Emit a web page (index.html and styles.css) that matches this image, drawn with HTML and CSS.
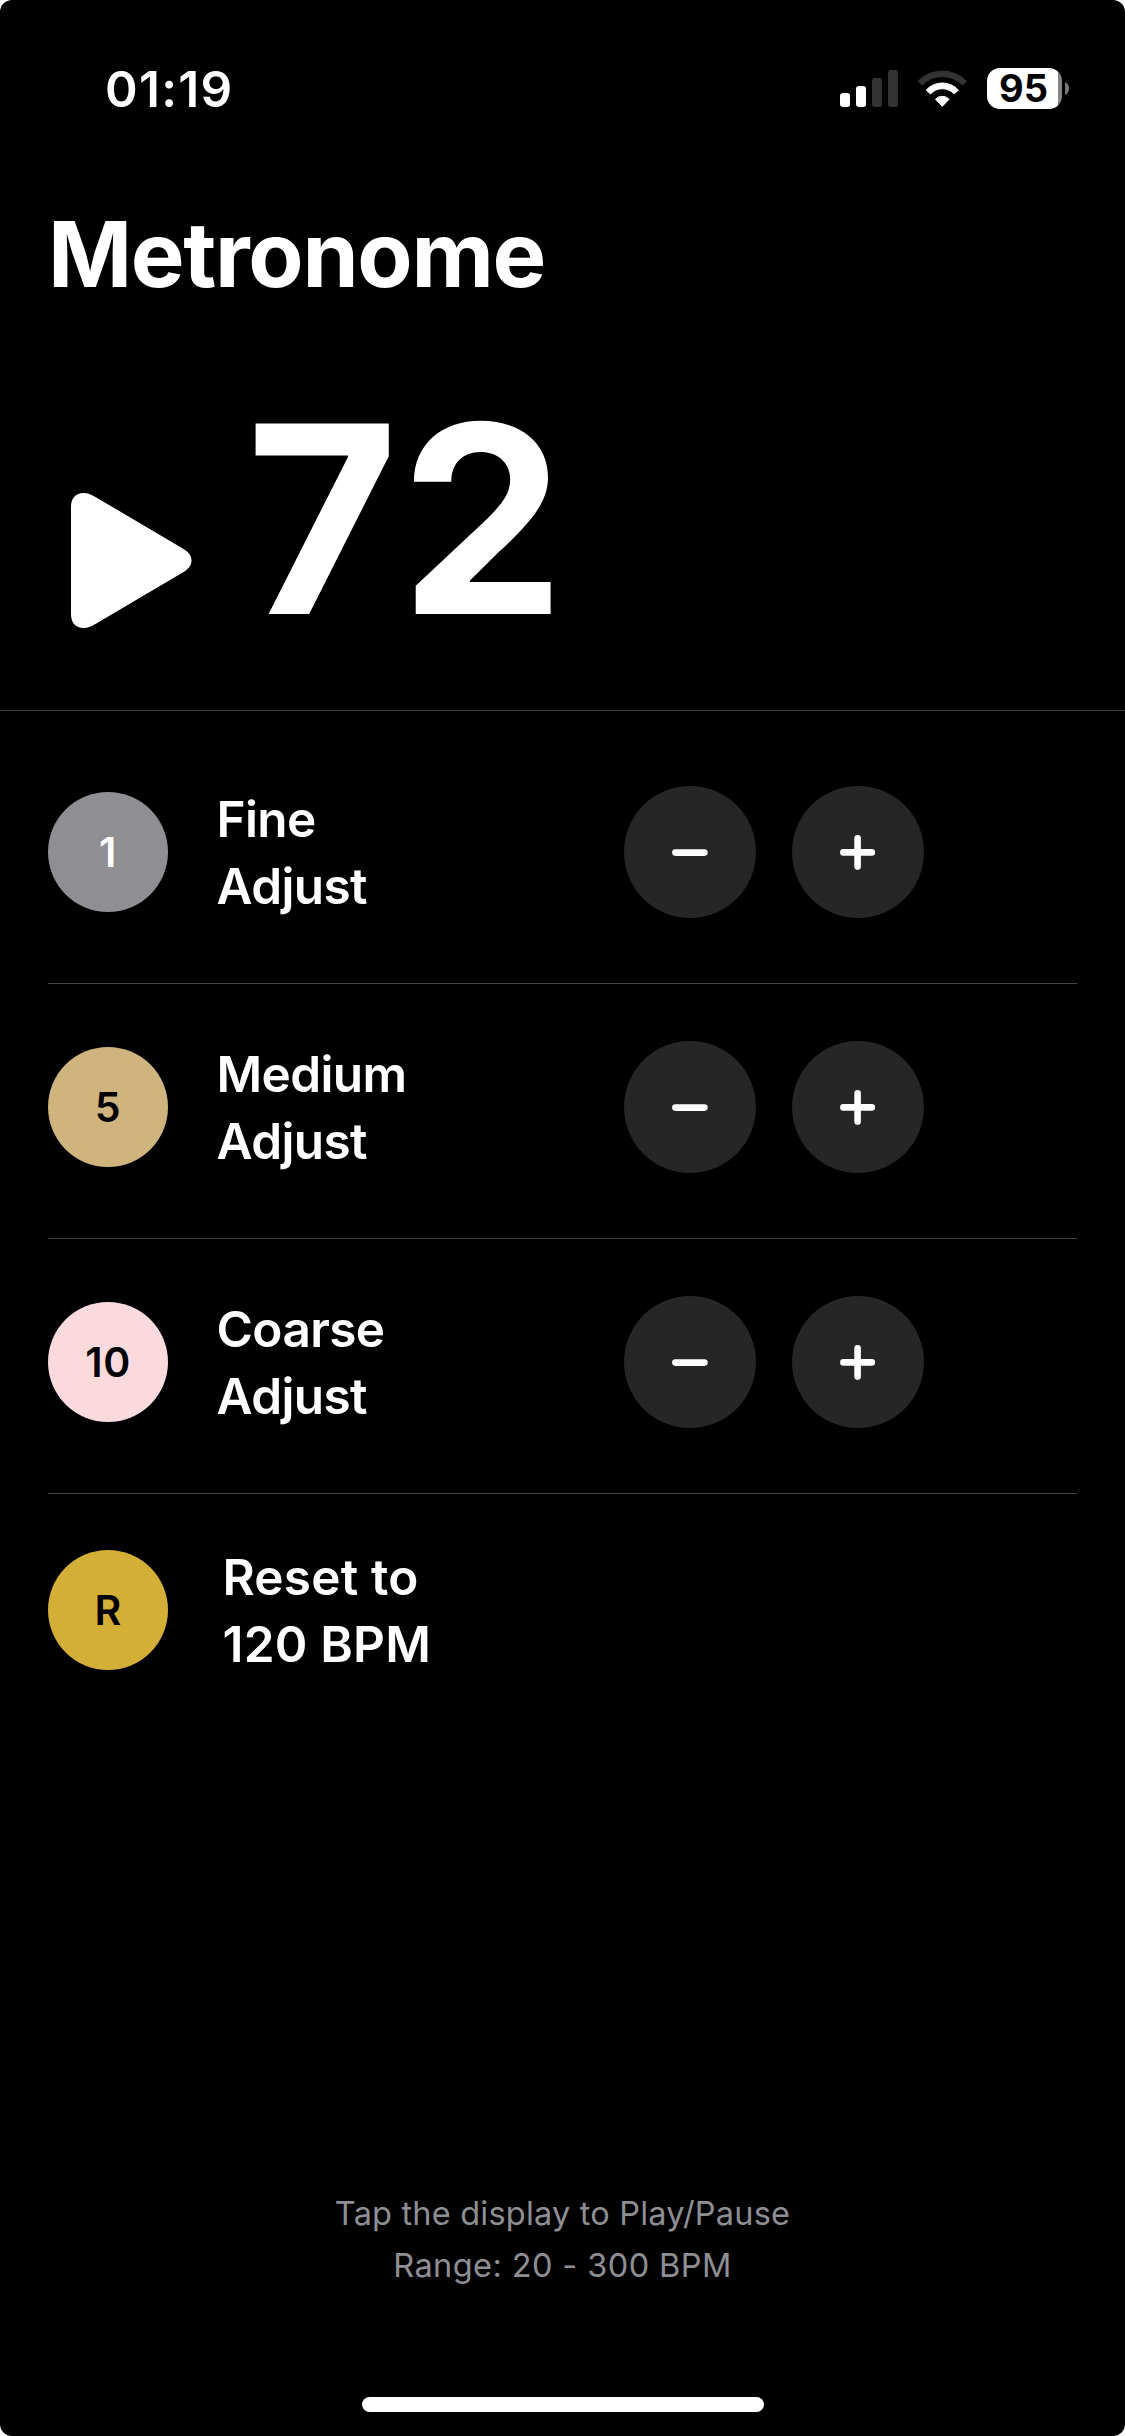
FILE: index.html
```
<!DOCTYPE html>
<html lang="en">
<head>
<meta charset="utf-8">
<title>Metronome</title>
<link rel="stylesheet" href="styles.css">
</head>
<body>
<div class="screen">
  <header class="status">
    <span class="time">01:19</span>
    <div class="indicators">
      <svg class="signal" width="58" height="37" viewBox="0 0 58 37">
        <rect x="0" y="23" width="10" height="14" rx="3" fill="#fff"/>
        <rect x="16" y="16" width="10" height="21" rx="3" fill="#fff"/>
        <rect x="32" y="8" width="10" height="29" rx="3" fill="#333"/>
        <rect x="48" y="0" width="10" height="37" rx="3" fill="#333"/>
      </svg>
      <svg class="wifi" width="51" height="37" viewBox="0 0 51 37">
        <path fill="#333" stroke="#333" stroke-linejoin="round" d="M1 11.2A34.1 34.1 0 0 1 49.6 11.2L45.6 15A28.7 28.7 0 0 0 5 15Z"/>
        <path fill="#fff" stroke="#fff" stroke-linejoin="round" d="M9.2 20.1A21.8 21.8 0 0 1 41.4 20.1L37.1 23.9A16 16 0 0 0 13.5 23.9Z"/>
        <path fill="#fff" stroke="#fff" stroke-linejoin="round" d="M18.5 29.3A9.2 9.2 0 0 1 32.1 29.3L25.3 36.3Z"/>
      </svg>
      <div class="battery">
        <span class="battery-level">95</span>
        <svg class="battery-nub" width="4" height="13" viewBox="0 0 4 13"><path fill="#777" d="M0 0C2.6 1.2 4 3.6 4 6.5S2.6 11.8 0 13Z"/></svg>
      </div>
    </div>
  </header>

  <h1 class="title">Metronome</h1>

  <section class="display">
    <svg class="play" width="121" height="135" viewBox="0 0 121 135">
      <path fill="#fff" d="M0 14C0 5 5 0 12.5 0C17 0 20 1.5 24 3.7L110.5 54.7C117 58.5 120.5 62 120.5 67.5S117 76.5 110.5 80.3L24 131.3C20 133.5 17 135 12.5 135C5 135 0 130 0 121Z"/>
    </svg>
    <span class="bpm">72</span>
  </section>

  <main class="controls">
    <div class="row">
      <span class="badge badge-fine">1</span>
      <div class="label">Fine<br>Adjust</div>
      <div class="buttons">
        <button class="round" aria-label="Decrease by 1"><svg width="36" height="36" viewBox="0 0 36 36"><path d="M3.4 18.6H32.4"/></svg></button>
        <button class="round" aria-label="Increase by 1"><svg width="36" height="36" viewBox="0 0 36 36"><path d="M3.4 18.4H31.8M17.6 4.2V32.6"/></svg></button>
      </div>
    </div>
    <div class="row">
      <span class="badge badge-medium">5</span>
      <div class="label">Medium<br>Adjust</div>
      <div class="buttons">
        <button class="round" aria-label="Decrease by 5"><svg width="36" height="36" viewBox="0 0 36 36"><path d="M3.4 18.6H32.4"/></svg></button>
        <button class="round" aria-label="Increase by 5"><svg width="36" height="36" viewBox="0 0 36 36"><path d="M3.4 18.4H31.8M17.6 4.2V32.6"/></svg></button>
      </div>
    </div>
    <div class="row">
      <span class="badge badge-coarse">10</span>
      <div class="label">Coarse<br>Adjust</div>
      <div class="buttons">
        <button class="round" aria-label="Decrease by 10"><svg width="36" height="36" viewBox="0 0 36 36"><path d="M3.4 18.6H32.4"/></svg></button>
        <button class="round" aria-label="Increase by 10"><svg width="36" height="36" viewBox="0 0 36 36"><path d="M3.4 18.4H31.8M17.6 4.2V32.6"/></svg></button>
      </div>
    </div>
    <div class="row row-reset">
      <span class="badge badge-reset">R</span>
      <div class="label">Reset to<br>120 BPM</div>
    </div>
  </main>

  <footer class="hint">
    <p class="hint-tap">Tap the display to Play/Pause</p>
    <p class="hint-range">Range: 20 - 300 BPM</p>
    <div class="home"></div>
  </footer>
</div>
</body>
</html>
```
FILE: styles.css
```
* { box-sizing: border-box; }

body {
  margin: 0;
  background: #fff;
  font-family: Inter, "Liberation Sans", sans-serif;
  color: #fff;
}

.screen {
  display: flex;
  flex-direction: column;
  width: 1125px;
  height: 2436px;
  background: #000;
  border-radius: 12px;
  overflow: hidden;
}

/* Status bar */
.status {
  display: flex;
  justify-content: space-between;
  align-items: center;
  height: 178px;
  padding: 0 56px 0 105px;
}

.time {
  font-size: 49.5px;
  font-weight: 600;
  letter-spacing: 1.3px;
  line-height: 60px;
}

.indicators {
  display: flex;
  align-items: center;
  margin-bottom: 1px;
}

.signal { margin-right: 19px; }
.wifi { margin-right: 19px; }

.battery { display: flex; align-items: center; gap: 3px; }

.battery-level {
  width: 75px;
  height: 41px;
  padding-right: 2px;
  border-radius: 13px;
  background: linear-gradient(to right, #fff 71px, #858585 71px);
  color: #000;
  font-size: 38px;
  font-weight: 700;
  line-height: 41px;
  text-align: center;
}

/* Title and tempo */
.title {
  margin: 0;
  padding: 22px 48px 0;
  font-size: 90.3px;
  font-weight: 700;
  letter-spacing: -1.3px;
  line-height: 110px;
}

.display {
  display: flex;
  align-items: center;
  height: 401px;
  padding-left: 71px;
  border-bottom: 1px solid #444;
}

.play { margin-top: 100px; }

.bpm {
  margin: 18px 0 0 54px;
  font-size: 262px;
  font-weight: 700;
  letter-spacing: 1.5px;
  line-height: 300px;
}

/* Adjustment rows */
.controls { padding: 18px 48px 0; }

.row {
  display: grid;
  grid-template-columns: 120px 407px auto;
  column-gap: 49px;
  align-items: center;
  justify-content: start;
  height: 255px;
  padding: 56px 0 64px;
  border-bottom: 1px solid #444;
}

.row-reset {
  column-gap: 55px;
  height: auto;
  padding-top: 49px;
  border-bottom: 0;
}

.row-reset .label { letter-spacing: 0.2px; }

.badge {
  width: 120px;
  height: 120px;
  border-radius: 50%;
  color: #000;
  font-size: 41px;
  font-weight: 600;
  letter-spacing: 0.5px;
  line-height: 120px;
  text-align: center;
}

.badge-fine { background: #8e8e93; color: #fff; }
.badge-medium { background: #cfb47e; }
.badge-coarse { background: #fadadd; }
.badge-reset { background: #d4af37; }

.label {
  padding-top: 1px;
  margin: 0 0 -1px -0.5px;
  font-size: 49.5px;
  font-weight: 600;
  letter-spacing: -0.6px;
  line-height: 67px;
}

.buttons {
  display: flex;
  gap: 36px;
  margin-left: -49px;
}

.round {
  display: grid;
  place-items: center;
  width: 132px;
  height: 132px;
  padding: 0;
  border: 0;
  border-radius: 50%;
  background: #262626;
}

.round path {
  fill: none;
  stroke: #fff;
  stroke-width: 6.6;
  stroke-linecap: round;
}

/* Hint and home indicator */
.hint {
  display: flex;
  flex-direction: column;
  align-items: center;
  margin-top: auto;
  padding-bottom: 24px;
  color: #8e8e93;
  font-size: 32.5px;
  line-height: 52px;
}

.hint p { margin: 0; }
.hint-tap { letter-spacing: 0.2px; }
.hint-range { letter-spacing: 0.4px; }

.home {
  width: 402px;
  height: 15px;
  margin-top: 105px;
  border-radius: 8px;
  background: #fff;
}
```
